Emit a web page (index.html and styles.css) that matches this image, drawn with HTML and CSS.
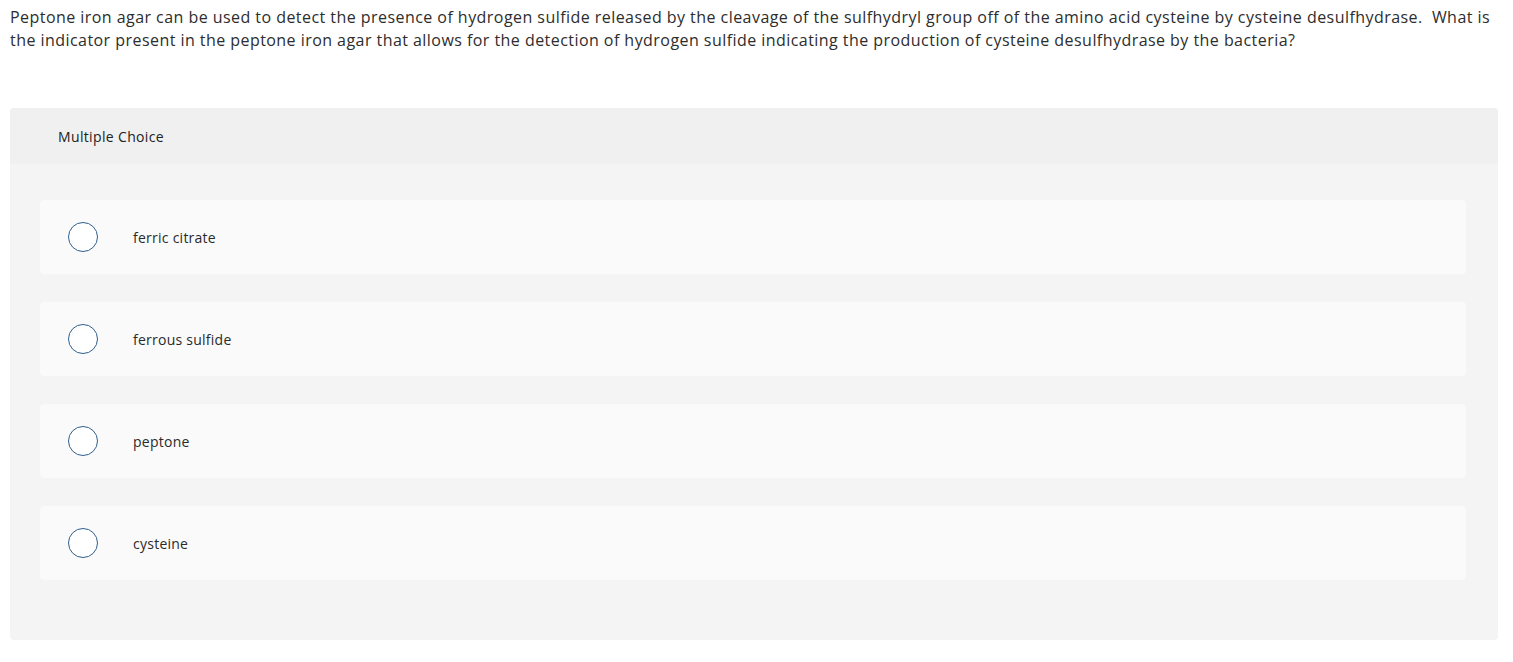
FILE: index.html
```html
<!DOCTYPE html>
<html>
<head>
<meta charset="utf-8">
<link rel="stylesheet" href="styles.css">
</head>
<body>
<div class="question">Peptone iron agar can be used to detect the presence of hydrogen sulfide released by the cleavage of the sulfhydryl group off of the amino acid cysteine by cysteine desulfhydrase.&nbsp; What is the indicator present in the peptone iron agar that allows for the detection of hydrogen sulfide indicating the production of cysteine desulfhydrase by the bacteria?</div>
<div class="panel">
  <div class="panel-header">Multiple Choice</div>
  <div class="panel-body">
    <label class="option"><span class="radio"></span><span class="option-text">ferric citrate</span></label>
    <label class="option"><span class="radio"></span><span class="option-text">ferrous sulfide</span></label>
    <label class="option"><span class="radio"></span><span class="option-text">peptone</span></label>
    <label class="option"><span class="radio"></span><span class="option-text">cysteine</span></label>
  </div>
</div>
</body>
</html>
```
FILE: styles.css
```css
html, body {
  margin: 0;
  padding: 0;
  background: #ffffff;
}
body {
  font-family: "Open Sans", "Liberation Sans", Arial, sans-serif;
  color: #333333;
}
.question {
  padding: 6px 15px 0 10px;
  font-size: 16px;
  line-height: 23px;
  letter-spacing: 0.45px;
  color: #2d2d2d;
}
.panel {
  margin: 56px 15px 0 10px;
  background: #f4f4f4;
  border-radius: 4px;
  overflow: hidden;
}
.panel-header {
  height: 56px;
  display: flex;
  align-items: center;
  padding-left: 48px;
  background: #f0f0f0;
  font-size: 14px;
  letter-spacing: 0.35px;
  color: #222;
}
.panel-body {
  padding: 36px 32px 60px 30px;
  display: flex;
  flex-direction: column;
  gap: 28px;
}
.option {
  height: 74px;
  display: flex;
  align-items: center;
  background: #fafafa;
  border-radius: 4px;
  padding-left: 28px;
  font-size: 14px;
  letter-spacing: 0.25px;
  color: #2a2a2a;
}
.radio {
  width: 28px;
  height: 28px;
  border: 1.5px solid #2f5f8e;
  border-radius: 50%;
  background: #fff;
  flex: none;
}
.option-text {
  margin-left: 35px;
}
```
